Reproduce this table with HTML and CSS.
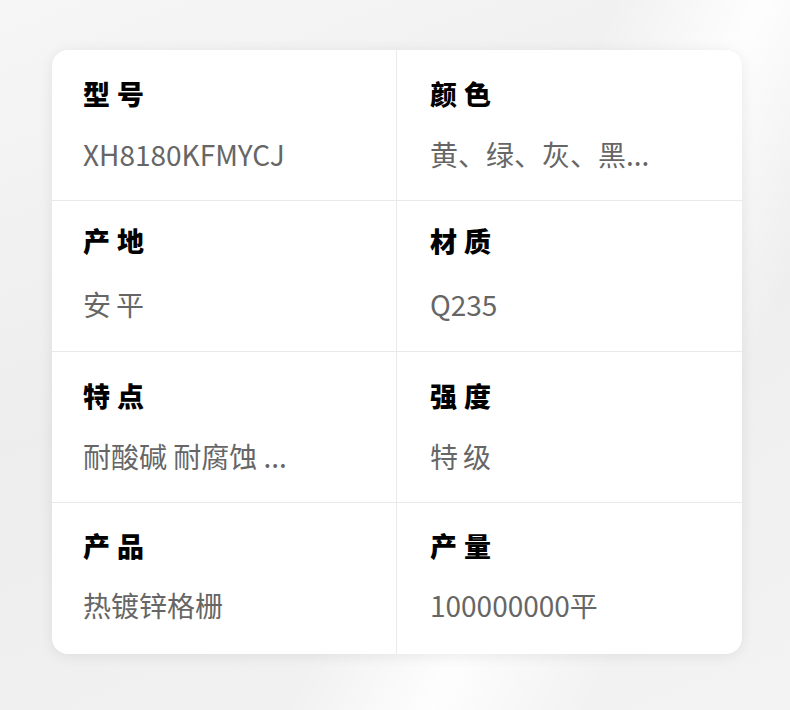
FILE: index.html
```html
<!DOCTYPE html>
<html>
<head>
    <title>产品参数</title>
    <link rel="stylesheet" href="styles.css">
</head>
<body>
    <!-- 产品参数卡片 -->
    <div class="spec-card">
        <div class="spec-cell">
            <div class="spec-label">型号</div>
            <div class="spec-value">XH8180KFMYCJ</div>
        </div>
        <div class="spec-cell">
            <div class="spec-label">颜色</div>
            <div class="spec-value">黄、绿、灰、黑...</div>
        </div>
        <div class="spec-cell row-two">
            <div class="spec-label">产地</div>
            <div class="spec-value spaced">安平</div>
        </div>
        <div class="spec-cell row-two">
            <div class="spec-label">材质</div>
            <div class="spec-value">Q235</div>
        </div>
        <div class="spec-cell">
            <div class="spec-label">特点</div>
            <div class="spec-value">耐酸碱 耐腐蚀 ...</div>
        </div>
        <div class="spec-cell">
            <div class="spec-label">强度</div>
            <div class="spec-value spaced">特级</div>
        </div>
        <div class="spec-cell">
            <div class="spec-label">产品</div>
            <div class="spec-value">热镀锌格栅</div>
        </div>
        <div class="spec-cell">
            <div class="spec-label">产量</div>
            <div class="spec-value">100000000平</div>
        </div>
    </div>
</body>
</html>
```

FILE: styles.css
```css
/* page background: soft grey with light streaks */
body {
    margin: 0;
    padding: 50px 0 0 52px;
    height: 710px;
    box-sizing: border-box;
    font-family: "Noto Sans CJK SC", "Noto Sans", sans-serif;
    background-color: #f0f0f0;
    background-image:
        linear-gradient(115deg, rgba(255,255,255,0) 55%, rgba(255,255,255,0.9) 68%, rgba(255,255,255,0) 82%),
        linear-gradient(160deg, #f6f6f6 0%, #ededed 45%, #f3f3f3 100%);
    overflow: hidden;
}
/* the card with the spec grid */
.spec-card {
    width: 690px;
    background-color: #fff;
    border-radius: 16px;
    box-shadow: 0px 2px 14px rgba(0, 0, 0, 0.08);
    display: grid;
    grid-template-columns: 345px 345px;
    overflow: hidden;
}
.spec-cell {
    height: 151px;
    box-sizing: border-box;
    padding: 28px 20px 0 31px;
    border-bottom: 1px solid #e9e9e9;
}
.spec-cell:nth-child(odd) {
    border-right: 1px solid #e9e9e9;
}
.spec-cell:nth-child(even) {
    padding-left: 33px;
}
.spec-cell:nth-last-child(-n+2) {
    border-bottom: none;
    padding-top: 27px;
}
.spec-cell:nth-last-child(-n+2) .spec-value {
    margin-top: 27px;
}
.spec-cell.row-two {
    padding-top: 24px;
}
.spec-cell.row-two .spec-value {
    margin-top: 31px;
}
.spec-label {
    font-size: 27px;
    line-height: 32px;
    font-weight: 900;
    color: #000;
    letter-spacing: 7px;
}
.spec-value {
    margin-top: 28px;
    font-size: 28px;
    line-height: 32px;
    color: #666;
    white-space: nowrap;
}
.spec-value.spaced {
    letter-spacing: 5px;
}
```
